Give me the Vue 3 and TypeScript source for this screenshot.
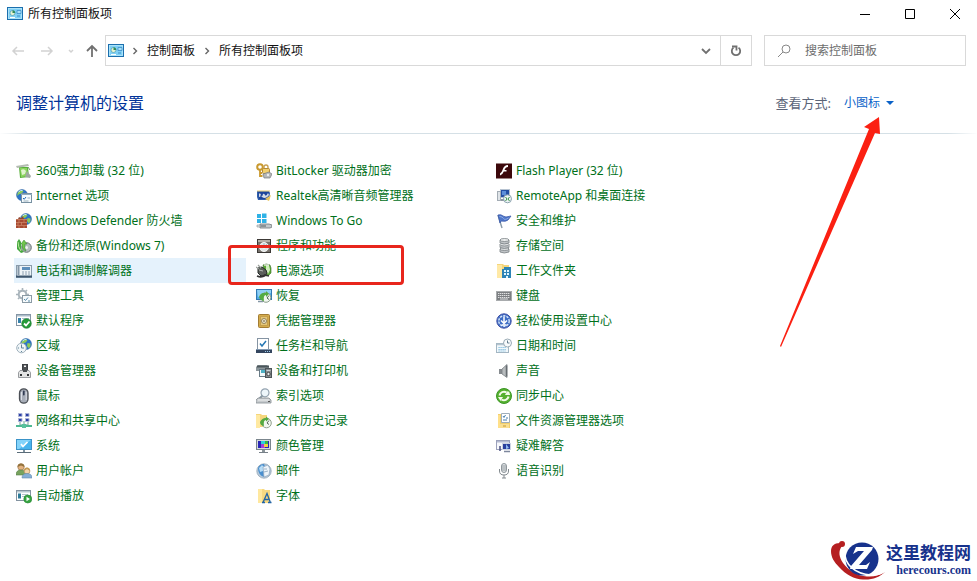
<script setup lang="ts">
import { ref } from 'vue'

interface PanelItem {
  name: string
  icon: string
}

const panelIcon =
  '<rect x=".5" y="1.5" width="15" height="12" fill="#7fd0f5" stroke="#1b6fae"/><rect x="1.5" y="2.5" width="13" height="10" fill="none" stroke="#b5e6fb" stroke-width=".8"/><circle cx="5.5" cy="7" r="2.5" fill="#e6f3cf" stroke="#4f9cb5" stroke-width=".7"/><path d="M5.5 7V4.3A2.7 2.7 0 0 1 8.2 7z" fill="#2f8b5d"/><path d="M10 4.5h4v3h-4z" fill="#a8e0fa" stroke="#3f8fc8" stroke-width=".8"/><path d="M10 10h3" stroke="#3f8fc8"/><path d="M3 11.5h5" stroke="#fff"/>'

const globe =
  '<circle cx="10" cy="6" r="5.5" fill="#2c76c9" stroke="#245b9c" stroke-width=".5"/><path d="M7 2q3-1.6 4.5.2L9.7 4.5 7 5.3 5.2 7q-.5-3 1.8-5zM11.5 5l3 .5q.7 3-1.6 5L11 8z" fill="#8ccb5a"/><path d="M6.5 3q2-2 4-1.5" stroke="#c9e9ff" fill="none"/>'

const items: PanelItem[] = [
  { name: '360强力卸载 (32 位)', icon: '<path d="M3 4h9l1 10-9 1z" fill="#58b03a"/><path d="M4 5h7l1 8-7 1z" fill="#8bd45f"/><path d="M0 3l12-2 1 2-12 2z" fill="#b4bcb2"/><path d="M5 7q3-2 5 1l-1 3-3 1z" fill="#dff3cd"/><path d="M11 8l4 5-1 2-5-1z" fill="#9fa8a0"/><path d="M12 4l2 3" stroke="#6f9a68"/>' },
  { name: 'BitLocker 驱动器加密', icon: '<circle cx="4" cy="4" r="2.8" fill="none" stroke="#c9992e" stroke-width="2"/><path d="M4 7v7m0-1h2.500m-2.500-3h2" stroke="#c9992e" stroke-width="1.8"/><path d="M8 6V4q0-2 2-2t2 2v2" fill="none" stroke="#c8a050" stroke-width="1.4"/><rect x="6.5" y="5.5" width="7" height="5" rx="1" fill="#f2cf6d" stroke="#b58a35"/><path d="M7 11l6-2 3 2-2 4H8z" fill="#b5b7b8" stroke="#777b7e" stroke-width=".7"/><circle cx="12" cy="12" r="1.2" fill="#ececec"/>' },
  { name: 'Flash Player (32 位)', icon: '<rect width="16" height="15" y=".5" fill="#3c080b"/><path d="M12 4Q9.5 4 8.500 7h2v1.600H7.8Q6.600 12 4 12.500v-1.900Q5.500 10 6.500 7q1.500-4.800 5.500-4.900z" fill="#fff"/>' },
  { name: 'Internet 选项', icon: '<g transform="translate(-4 1)">' + globe + '</g><rect x="5.5" y="5.5" width="10" height="9" fill="#f5fbff" stroke="#7891a2"/><path d="M5 6.5h11" stroke="#90adc0"/><path d="M7 10l1.200 1.300L10 9" fill="none" stroke="#2468b1"/><path d="M11.500 10h2.500M7.500 13h5" stroke="#9db0bb"/>' },
  { name: 'Realtek高清晰音频管理器', icon: '<path d="M1 3h12l1 2-1 7H2L1 9z" fill="#315eaa"/><path d="M2 4h11l-1 7H3z" fill="#1d459c"/><path d="M3 6q1-2 2 1t2-1q1-1 2 1t3-2l1 2q-2 3-4 3T6 9t-3 0z" fill="#d6dce5"/><circle cx="5" cy="8" r=".8" fill="#18418a"/><path d="M9 11l6-4-2 6z" fill="#e8c25a"/><path d="M1 3h13" stroke="#e5c977"/>' },
  { name: 'RemoteApp 和桌面连接', icon: '<rect x="4.5" y="1.5" width="9" height="8" fill="#2450a4" stroke="#b7c3d1"/><path d="M6 3h4v4H6z" fill="#5d8fd9"/><rect x="1.5" y="3.5" width="3" height="9" fill="#dfe4e8" stroke="#a3acb4"/><path d="M5 12h4" stroke="#8d98a3" stroke-width="2"/><circle cx="11.5" cy="10.8" r="4" fill="#edf4f6" stroke="#8ba1ad"/><path d="M9.500 9l1.500 2-1.500 2m4-4L12 11l1.500 2" fill="none" stroke="#3a9345"/>' },
  { name: 'Windows Defender 防火墙', icon: globe + '<rect x="0" y="6" width="11" height="9" fill="#a84a31"/><path d="M0 6.500h11M0 9.500h11M0 12.500h11M3 6v3m5-3v3M5.500 9v3M2 9v3m1 1v2m5-2v2" stroke="#d08a6c" stroke-width=".7"/><path d="M2 6l1-2 2 1 2-2 1 3z" fill="#8e4835"/>' },
  { name: 'Windows To Go', icon: '<path d="M1 1h4v4H1zM6 .5h4.500V5H6zM1 6h4v4H1zM6 6h4.500v4H6z" fill="#2fb2e6"/><path d="M4 11h9l3 1v2l-2 1H4z" fill="#c2c8cc" stroke="#6d7377" stroke-width=".8"/><path d="M5 12h5v2H5z" fill="#8b9296"/><path d="M1 12h3v2H1z" fill="#dfe3e5" stroke="#8b9296" stroke-width=".6"/>' },
  { name: '安全和维护', icon: '<path d="M2 2l4 13" stroke="#899ba9" stroke-width="1.4"/><path d="M2 2q3-1 5 1t8 0l-3 4q-2 2-7 1L4 10z" fill="#4f78cb" stroke="#3a58a8" stroke-width=".8"/><path d="M3.5 3.5q3 0 4 2t5-.5" fill="none" stroke="#8fabe4"/>' },
  { name: '备份和还原(Windows 7)', icon: '<circle cx="10.5" cy="9.5" r="4.800" fill="#b3bcbe" stroke="#6b7475"/><circle cx="10.5" cy="9.5" r="1.5" fill="#f2f3f3"/><path d="M1 4l2-3 2 3v7l3 3-3 1-4-4z" fill="#45a840"/><path d="M5 6l3-4 3 4H9q-1 4 1 7-4-1-4-7z" fill="#72c54d" stroke="#2d842d" stroke-width=".5"/><path d="M2 4q0 5 3 9" stroke="#bce69a" fill="none"/>' },
  { name: '程序和功能', icon: '<rect x="1.5" y="1.5" width="13" height="13" fill="#77726c" stroke="#3c3936"/><path d="M2 3h12" stroke="#cbc6bd" stroke-width="1.5"/><circle cx="8" cy="9" r="4.5" fill="#e2e7e7" stroke="#f6f6f6"/><circle cx="8" cy="9" r="1.3" fill="#6e7979" stroke="#fff"/><path d="M8 5v2m2.800-.8L9.200 7.800" stroke="#93b8c8"/>' },
  { name: '存储空间', icon: '<g fill="#c0c4c7" stroke="#7a8084" stroke-width=".8"><path d="M4 11v3q4 2 9 0v-3z"/><ellipse cx="8.5" cy="11" rx="4.5" ry="1.5" fill="#dfe2e3"/><path d="M4 6.500v3q4 2 9 0v-3z"/><ellipse cx="8.5" cy="6.5" rx="4.5" ry="1.5" fill="#dfe2e3"/><path d="M4 2v3q4 2 9 0V2z"/><ellipse cx="8.5" cy="2" rx="4.5" ry="1.5" fill="#eceeee"/></g>' },
  { name: '电话和调制解调器', icon: '<rect x=".5" y="2.5" width="15" height="12" fill="#edf3f7" stroke="#8a9cab"/><path d="M1.500 3h2v9h-2z" fill="#8497a7"/><path d="M6 4h8v3H6z" fill="#5d8fbb"/><path d="M6 9h2m1 0h2m1 0h2M6 11h2m1 0h2m1 0h2" stroke="#8ea1b2"/><path d="M0 13.500h16" stroke="#3d566f" stroke-width="2"/>' },
  { name: '电源选项', icon: '<path d="M7 2q3-2 7 0l1 3v5q-2 3-6 3z" fill="#5cab36" stroke="#376d26" stroke-width=".6"/><path d="M10 2l3 0 1 5-2 4-2-3z" fill="#d2efbe"/><path d="M8 2h5" stroke="#dfe5dc" stroke-width="1.5"/><path d="M2 5l4-1 4 3 1 3-2 3-4 0-3-3z" fill="#5b5f5b" stroke="#242a27"/><path d="M0 4l3 2M2 2l3 3" stroke="#9a9f9a" stroke-width="1.2"/><path d="M3 7l4 1" stroke="#b7bcb7"/><path d="M1 13q5 2 8-1l4 1" fill="none" stroke="#333" stroke-width="1.8"/>' },
  { name: '工作文件夹', icon: '<path d="M1 1h6l1 1h5v12H1z" fill="#f5d67c"/><path d="M1 2h5v13H1z" fill="#ffe9a6"/><path d="M6 6h2V4h7v11H6z" fill="#2d84b7"/><path d="M8 7h2v2H8zm3 0h2v2h-2zM8 10h2v2H8zm3 0h2v2h-2zm-1 3h2v2h-2z" fill="#dff6ff"/>' },
  { name: '管理工具', icon: '<circle cx="6.5" cy="6.5" r="3.800" fill="none" stroke="#a9b4bb" stroke-width="2"/><path d="M6.5 0v2.5m0 8V13M0 6.5h2.5m8 0H13M2 2l1.700 1.700M2 11l1.700-1.700M11 2L9.300 3.700" stroke="#a9b4bb" stroke-width="1.6"/><circle cx="6.5" cy="6.5" r="1.500" fill="#fff"/><rect x="6.5" y="7.5" width="9" height="7" fill="#f6fafc" stroke="#8b9ba5"/><path d="M8 11l1.500 1.500L12 9.500m0 3.500h2" stroke="#5a8cab" fill="none"/>' },
  { name: '恢复', icon: '<rect x=".5" y="1.5" width="15" height="10" fill="#4fa9e4" stroke="#3279b2"/><path d="M1 2h14v3L2 9z" fill="#8fd0f5"/><path d="M2 13.500h5" stroke="#8497a5" stroke-width="1.500"/><circle cx="10" cy="9.5" r="4.800" fill="#f2f7f0" stroke="#8b9f8d"/><path d="M3 9q2-5 7-4v-2l3 3-3 3V7q-3 0-2 6-4-.500-5-4z" fill="#55ac43"/><path d="M11 10l2-2.500M11 10l2 1.500" stroke="#4f6652"/>' },
  { name: '键盘', icon: '<rect x=".5" y="3.5" width="15" height="9" fill="#7c7f82" stroke="#a8abad"/><path d="M2 5.500h12M2 7.500h12M2 9.500h12" stroke="#dfe1e2" stroke-dasharray="1.400 .6"/><path d="M4 11h8" stroke="#dadddf"/>' },
  { name: '默认程序', icon: '<rect x=".5" y="1.5" width="14" height="11" fill="#fff" stroke="#8596a5"/><path d="M1 2h13v1.500H1z" fill="#adbdca"/><path d="M2 5h3v5H2z" fill="#3681ab"/><path d="M6 5.500h7" stroke="#a9bccb"/><circle cx="10.5" cy="10.5" r="4.800" fill="#259a39" stroke="#187a2a" stroke-width=".6"/><path d="M8 10.5l2 2 3.500-4" fill="none" stroke="#fff" stroke-width="1.8"/>' },
  { name: '凭据管理器', icon: '<rect x="2.5" y="1.5" width="11" height="13" rx="1" fill="#d3ab4b" stroke="#a37c34"/><rect x="4.5" y="3.5" width="7" height="9" fill="#e4c678" stroke="#c59f4c"/><circle cx="8" cy="8" r="2.500" fill="#efe9d1" stroke="#94825a"/><circle cx="8" cy="8" r=".9" fill="#8e815f"/>' },
  { name: '轻松使用设置中心', icon: '<circle cx="8" cy="8" r="7.2" fill="#4573c6" stroke="#3e4fa5"/><circle cx="8" cy="8" r="5.2" fill="#3f6ec5" stroke="#dae8fb" stroke-dasharray="2.2 1.1" stroke-width="1.400"/><path d="M8 3.500V10M5 7.500L8 10.500l3-3M5.500 12h5" fill="none" stroke="#fff" stroke-width="1.500"/>' },
  { name: '区域', icon: globe + '<circle cx="5.5" cy="10" r="4.8" fill="#f1f6f8" stroke="#9fb0bc"/><path d="M5.5 6.5V10H8M2 10h1m2.5 3v1" fill="none" stroke="#61859a"/>' },
  { name: '任务栏和导航', icon: '<rect x="1.5" y=".5" width="11" height="11" fill="#fff" stroke="#8594a3"/><path d="M4 5.500l2 2.500 4-5" fill="none" stroke="#2577b3" stroke-width="1.500"/><path d="M0 12h16v3H0z" fill="#34465f"/><path d="M9 13.500h1m1 0h1m1 0h1" stroke="#9cc9ea"/><path d="M0 11.500h16" stroke="#7f97b0"/>' },
  { name: '日期和时间', icon: '<rect x=".5" y="5.5" width="12" height="9" fill="#f2f8fb" stroke="#a3b6c3"/><path d="M1 6.5h11" stroke="#b4c4cf" stroke-width="1.500"/><path d="M2.500 9.500h8M2.500 11.500h8M2.500 13h7" stroke="#7dbadc" stroke-dasharray="1.2 .8"/><circle cx="11.5" cy="5" r="4" fill="#f8fbfc" stroke="#9aaab5"/><path d="M11.5 2.5V5h2" fill="none" stroke="#617b8d"/>' },
  { name: '设备管理器', icon: '<rect x="6.5" y="1.5" width="5" height="7" fill="#4c5053" stroke="#3e4144"/><path d="M8 2.500h2v1.500H8z" fill="#f7f7f7"/><path d="M2.500 9.500l1.500-2h9l1.500 2v5h-12z" fill="#e2e3e3" stroke="#83878a" stroke-width=".8"/><path d="M7 7h4v2H7z" fill="#4c5053"/><path d="M4 12h2m5 0h2" stroke="#303436" stroke-width="1.800"/>' },
  { name: '设备和打印机', icon: '<path d="M0 4l2-2h9l2 2v4H0z" fill="#8d979c"/><path d="M1 3.500h12" stroke="#4b565b" stroke-width="2"/><rect x="3.500" y="6.500" width="6" height="7" fill="#f1f8fa" stroke="#677a85"/><path d="M5 7h4v3H5z" fill="#4db0c4"/><rect x="9.5" y="5.500" width="6" height="9" fill="#858b8e" stroke="#4d5559"/><circle cx="12.5" cy="11" r="1.700" fill="#e6ecef" stroke="#444"/><path d="M10.500 7.500h4" stroke="#cfd4d6"/>' },
  { name: '声音', icon: '<path d="M3 6h3v5H3z" fill="#868b8f"/><path d="M6 6l5-4.500v13L6 11z" fill="#b8bcbe" stroke="#7b8185" stroke-width=".8"/><path d="M10.500 2.500v11" stroke="#666c70" stroke-width="1.500"/>' },
  { name: '鼠标', icon: '<rect x="3.5" y=".8" width="8.500" height="14.4" rx="4.2" fill="#a7adb8" stroke="#4b4f55" stroke-width="1.3"/><path d="M5.500 4v8M10.200 4v8" stroke="#dce0e8"/><rect x="7" y="2.500" width="1.600" height="5" rx=".8" fill="#303a52"/>' },
  { name: '索引选项', icon: '<circle cx="9" cy="4.800" r="4" fill="#edf6fb" stroke="#94a3b0" stroke-width="1.2"/><path d="M6.5 7.500L3.500 10.500" stroke="#8999a4" stroke-width="2"/><path d="M2 10h11l2 2v3H0v-3z" fill="#c6cacd" stroke="#868d92" stroke-width=".8"/><path d="M2 12h11" stroke="#eff1f2"/><path d="M12 13.500h2" stroke="#555"/>' },
  { name: '同步中心', icon: '<circle cx="8" cy="8" r="7.5" fill="#55b02f" stroke="#3c9626"/><path d="M3.500 7.500A4.500 4.500 0 0 1 10.500 4.500M12.500 8.500A4.500 4.500 0 0 1 5.500 11.500" fill="none" stroke="#f3fbe9" stroke-width="2"/><path d="M9 7h5l-2.500-4zM7 9H2l2.500 4z" fill="#f3fbe9"/><path d="M9.500 7h4.500l-1-4z" fill="#f3fbe9"/>' },
  { name: '网络和共享中心', icon: '<path d="M4 9v3h8V9M8 8v5" fill="none" stroke="#8fb9ae" stroke-width="1.300"/><path d="M0 13h16" stroke="#4eb894" stroke-width="2"/><g fill="#2b3fa6" stroke="#aab3d6"><path d="M2.500.5h3.500v3h-3.500zM9.500.5h3.500v3h-3.500zM2.500 5.500h3.500v3h-3.500zM9.500 5.500h3.500v3h-3.500z"/></g><path d="M6 11h4v4H6z" fill="#58c19d"/>' },
  { name: '文件历史记录', icon: '<path d="M0 1h5l1 1h5v12H0z" fill="#f5d67c"/><path d="M0 2h4v13H0z" fill="#ffe9a1"/><circle cx="10.5" cy="10" r="4.800" fill="#f1f6ee" stroke="#92a08f"/><path d="M4 9q2-4 6-4V3.500l3 2.500-3 2.500V7q-3 0-2 6-4-.500-4-4z" fill="#55a941"/><path d="M11 10l2-2.500M11 10l2 1.500" stroke="#536657"/>' },
  { name: '文件资源管理器选项', icon: '<path d="M2 1h6l1 1h5v13H2z" fill="#f2cf6d"/><path d="M2 2h2v13H2z" fill="#ffe08a"/><path d="M5.500 .5h8v9h-8z" fill="#fff" stroke="#9fadb9"/><path d="M7 3l1 1.500L9.500 2M10 5h2M7 7h4" fill="none" stroke="#477eae"/><path d="M4 11h9v4H4z" fill="#fadf92"/><path d="M7 13h3" stroke="#c59a35"/>' },
  { name: '系统', icon: '<rect x=".5" y="1.5" width="15" height="10" fill="#48b4ed" stroke="#3a93c8"/><path d="M1 2h14L3 11H1z" fill="#83d3fa"/><path d="M5 6l2 2.500L11.500 4" stroke="#fff" stroke-width="1.6" fill="none"/><path d="M7 12h2v2H7z" fill="#7f929f"/><path d="M1 14.500h14" stroke="#5a6c79"/>' },
  { name: '颜色管理', icon: '<rect x=".5" y="1.500" width="14" height="10" fill="#d5dadd" stroke="#7b868d"/><path d="M2 3h11v7H2z" fill="#2a26b7"/><path d="M5 3h4v3H5z" fill="#2dd2dc"/><path d="M9 3h3v4H9z" fill="#35b744"/><path d="M5 6h4v4H5z" fill="#a63bdc"/><path d="M8 6h4v3H8z" fill="#f0d040"/><path d="M6 12h3v2H6z" fill="#8b949a"/><path d="M3 14.500h9" stroke="#788189"/>' },
  { name: '疑难解答', icon: '<rect x=".5" y="2.500" width="13" height="9" fill="#f7f8fc" stroke="#9ba1bb"/><path d="M1 3h12v1.500H1z" fill="#b5bbd1"/><rect x="6.500" y="5.500" width="8" height="6" fill="#293e9d" stroke="#cdd3e2"/><path d="M8 13.500h6" stroke="#7d879d" stroke-width="1.500"/><path d="M10 6l3 4-3 1z" fill="#8fb8f0"/><path d="M4 8v5" stroke="#4b5180" stroke-width="1.500"/>' },
  { name: '用户帐户', icon: '<circle cx="5" cy="4" r="3.200" fill="#e4b27f" stroke="#a5825a" stroke-width=".8"/><path d="M1.500 4q0-3.500 3.500-3.500T8.500 4L5 2.500z" fill="#93723c"/><path d="M0 12q0-5 5-5t5 5z" fill="#77a35e" stroke="#557d47" stroke-width=".6"/><circle cx="11" cy="8" r="2.900" fill="#f3d3a8" stroke="#b8935f" stroke-width=".8"/><path d="M8 8q0-3.500 3-3.500t3 3.500l-3-2z" fill="#c49b52"/><path d="M6 15q0-4.500 5-4.500t5 4.500z" fill="#84aed6" stroke="#6389ab" stroke-width=".6"/>' },
  { name: '邮件', icon: '<circle cx="8" cy="8" r="7.200" fill="#b8cbdc" stroke="#94a6b5" stroke-width=".8"/><path d="M2 5q2-4 6-4l2 5-2 8q-6-2-6-9z" fill="#4a8fce"/><path d="M3 5l3-3 2 2-1 4-3 1z" fill="#b6dcf6"/><path d="M7 4l5-2 2 4-1 6-5 2z" fill="#eef4f9" stroke="#8ca5bd" stroke-width=".7"/><path d="M8 6h3M8 9l4-1" fill="none" stroke="#9db5c9"/>' },
  { name: '语音识别', icon: '<rect x="5.500" y=".500" width="5" height="9" rx="2.500" fill="#e2e5e7" stroke="#8f979c"/><path d="M6 3h4M6 5h4M6 7h4" stroke="#959da2"/><path d="M3.500 6v2q0 4 4.500 4t4.500-4V6M8 12v3m-2 0h4" fill="none" stroke="#82898e"/>' },
  { name: '自动播放', icon: '<rect x=".500" y="2.500" width="14" height="10" fill="#fff" stroke="#8393a0"/><path d="M1 3h13v1.500H1z" fill="#b7c8d0"/><path d="M2 5.500h3v5H2z" fill="#2d7b99"/><path d="M6 6.500h6M6 8.500h3" stroke="#b3c4cd"/><circle cx="11.800" cy="11" r="4" fill="#36a441" stroke="#238530" stroke-width=".6"/><path d="M10.500 8.800v4.400l3.500-2.200z" fill="#fff"/>' },
  { name: '字体', icon: '<path d="M2 1h6l1 1h5v13H2z" fill="#f7d981"/><path d="M2 1h4v14H2z" fill="#ffe89f"/><path d="M6 14.500h3m3 0h3.500M7.200 14L11 5.500l3.200 8.500M8.500 11.500h4" fill="none" stroke="#2465a5" stroke-width="1.300"/>' },
]

const selected = ref('电话和调制解调器')
const view = ref('小图标')
const query = ref('')
</script>

<template>
  <div class="window">
    <header class="titlebar">
      <svg class="icon" viewBox="0 0 16 16" v-html="panelIcon" />
      <span class="caption">所有控制面板项</span>
      <div class="controls">
        <button type="button" aria-label="最小化"><svg viewBox="0 0 10 10"><path d="M0 5.5h10" /></svg></button>
        <button type="button" aria-label="最大化"><svg viewBox="0 0 10 10"><path d="M.5.5h9v9h-9z" /></svg></button>
        <button type="button" aria-label="关闭"><svg viewBox="0 0 10 10"><path d="M0 0l10 10M10 0L0 10" /></svg></button>
      </div>
    </header>

    <div class="toolbar">
      <nav class="history">
        <button type="button" aria-label="后退" disabled><svg viewBox="0 0 14 14"><path d="M13 7H2M6 3L2 7l4 4" /></svg></button>
        <button type="button" aria-label="前进" disabled><svg viewBox="0 0 14 14"><path d="M1 7h11M8 3l4 4-4 4" /></svg></button>
        <button type="button" class="small" aria-label="最近浏览的位置" disabled><svg viewBox="0 0 14 14"><path d="M5 6l2 2 2-2" /></svg></button>
        <button type="button" class="up" aria-label="上移"><svg viewBox="0 0 14 14"><path d="M7 13V2M2 7l5-5 5 5" /></svg></button>
      </nav>
      <div class="address">
        <svg class="icon" viewBox="0 0 16 16" v-html="panelIcon" />
        <svg class="chevron" viewBox="0 0 6 8"><path d="M1.5 1l3 3-3 3" /></svg>
        <a href="#">控制面板</a>
        <svg class="chevron" viewBox="0 0 6 8"><path d="M1.5 1l3 3-3 3" /></svg>
        <a href="#">所有控制面板项</a>
        <button type="button" class="drop" aria-label="以前的位置"><svg viewBox="0 0 14 14"><path d="M3 5l4 4 4-4" /></svg></button>
        <button type="button" class="refresh" aria-label="刷新"><svg viewBox="0 0 14 14"><path d="M9.5 3.600A4.200 4.200 0 1 1 4.500 3.600" /><path d="M3 2.500h4.500v4" /></svg></button>
      </div>
      <label class="search">
        <svg viewBox="0 0 14 14"><circle cx="9" cy="5" r="4" /><path d="M6 8l-5 5" /></svg>
        <input v-model="query" type="search" placeholder="搜索控制面板" aria-label="搜索控制面板" />
      </label>
    </div>

    <main>
      <div class="heading">
        <h1>调整计算机的设置</h1>
        <div class="view">
          <label for="view">查看方式:</label>
          <span class="picker">
            <select id="view" v-model="view">
              <option>小图标</option>
              <option>大图标</option>
              <option>类别</option>
            </select>
            <svg viewBox="0 0 8 4"><path d="M0 0h8L4 4z" /></svg>
          </span>
        </div>
      </div>
      <ul class="items">
        <li v-for="item in items" :key="item.name">
          <a href="#" :class="{ selected: item.name === selected }" @mouseenter="selected = item.name">
            <svg class="icon" viewBox="0 0 16 16" v-html="item.icon" />
            <span>{{ item.name }}</span>
          </a>
        </li>
      </ul>
    </main>

    <div class="marker"></div>
    <svg class="pointer" viewBox="0 0 102 232"><path d="M100 1L85 11l5 2L1 230l1 1L96 17l5 1z" /></svg>

    <div class="brand">
      <svg viewBox="0 0 58 42">
        <path d="M10 4C4 4 1 7 1 12c0 6 3 11 8 16 7 8 15 12 24 12.500 9 .5 17-2 22-8-5 4-11 5.500-18 5C27 37 18 31 13 24 9 18 8 12 12 7z" fill="#b51f21" />
        <circle cx="12" cy="5" r="3" fill="#b51f21" />
        <circle cx="32" cy="20" r="16.500" fill="#17328c" />
        <path d="M15 13c-1 12 10 22 26 23 6 0 11-1 14-4" fill="none" stroke="#fff" stroke-width="1.500" />
        <path d="M23 15l3-7h17l-1 3-13 15h7l4-3-3 7H20l1-3 13-15h-6z" fill="#fff" />
      </svg>
      <div class="brand-text">
        <strong>这里教程网</strong>
        <span>herecours.com</span>
      </div>
    </div>
  </div>
</template>

<style>
body {
  margin: 0;
  background: #fff;
}
</style>

<style scoped>
.window {
  position: relative;
  box-sizing: border-box;
  min-height: 100vh;
  overflow: hidden;
  background: #fff;
  color: #111;
  font-family: "Noto Sans", "Noto Sans CJK SC", sans-serif;
  font-size: 12px;
  line-height: 16px;
}

button {
  display: grid;
  place-items: center;
  padding: 0;
  border: 0;
  background: none;
}

a {
  color: inherit;
  text-decoration: none;
}

.icon {
  flex: none;
  width: 16px;
  height: 16px;
}

.titlebar {
  display: flex;
  align-items: center;
  height: 28px;
  padding-left: 7px;
}

.caption {
  margin-left: 5px;
}

.controls {
  display: flex;
  margin-left: auto;
}

.controls button {
  width: 45px;
  height: 28px;
}

.controls svg {
  width: 10px;
  height: 10px;
  fill: none;
  stroke: #000;
}

.toolbar {
  display: flex;
  align-items: center;
  height: 31px;
  padding: 7px 11px 0 7px;
}

.history {
  display: flex;
  width: 98px;
}

.history button {
  width: 22px;
  height: 28px;
}

.history button + button {
  margin-left: 7px;
}

.history .small,
.history .up {
  width: 18px;
}

.history button.small {
  margin-left: 4px;
}

.history button.up {
  margin-left: 3px;
}

.history svg {
  width: 14px;
  height: 14px;
  fill: none;
  stroke: #d2d2d2;
  stroke-width: 1.5;
}

.history .up svg {
  stroke: #707070;
  stroke-width: 1.8;
}

.address {
  display: flex;
  flex: 1;
  align-items: center;
  box-sizing: border-box;
  height: 31px;
  padding-left: 2px;
  border: 1px solid #d9d9d9;
}

.chevron {
  width: 6px;
  height: 8px;
  margin: 0 9px;
  fill: none;
  stroke: #666;
  stroke-width: 1.4;
}

.address .icon + .chevron {
  margin-left: 8px;
}

.address button {
  height: 29px;
}

.address button svg {
  width: 14px;
  height: 14px;
  fill: none;
  stroke: #707070;
  stroke-width: 1.8;
}

.drop {
  width: 28px;
  margin-left: auto;
}

.address .refresh {
  width: 31px;
  border-left: 1px solid #d9d9d9;
}

.search {
  display: flex;
  align-items: center;
  box-sizing: border-box;
  width: 202px;
  height: 31px;
  margin-left: 12px;
  padding: 0 12px;
  border: 1px solid #d9d9d9;
}

.search svg {
  flex: none;
  width: 14px;
  height: 14px;
  fill: none;
  stroke: #888;
}

.search input {
  flex: 1;
  min-width: 0;
  margin-left: 14px;
  padding: 0;
  border: 0;
  outline: 0;
  background: none;
  font: inherit;
}

.search input::placeholder {
  color: #6d6d6d;
  opacity: 1;
}

.heading {
  display: flex;
  align-items: center;
  justify-content: space-between;
  height: 60px;
  margin-top: 7px;
  padding: 0 83px 0 16px;
  border-bottom: 1px solid;
  border-image: linear-gradient(90deg, transparent, #d5e0e6 30px, #d5e0e6 calc(100% - 30px), transparent) 1;
}

h1 {
  margin: 0;
  color: #003399;
  font-size: 16px;
  font-weight: 400;
  line-height: 20px;
}

.view {
  display: flex;
  align-items: center;
}

.view label {
  margin-right: 13px;
  color: #5b6478;
  font-size: 13px;
}

.picker {
  display: flex;
  align-items: center;
  gap: 5px;
}

.picker select {
  appearance: none;
  padding: 0;
  border: 0;
  background: none;
  color: #0a62c8;
  font: inherit;
}

.picker svg {
  width: 8px;
  height: 4px;
  fill: #0a62c8;
}

.items {
  display: grid;
  grid-template-columns: repeat(3, 232px);
  column-gap: 8px;
  margin: 0;
  padding: 24px 14px;
  list-style: none;
}

.items a {
  display: flex;
  align-items: center;
  gap: 4px;
  height: 25px;
  padding-left: 2px;
  color: #00701a;
  white-space: nowrap;
}

.items a.selected {
  background: #e5f2fc;
}

.marker {
  position: absolute;
  top: 245px;
  left: 228px;
  box-sizing: border-box;
  width: 176px;
  height: 40px;
  border: 3px solid #e8261c;
  border-radius: 4px;
}

.pointer {
  position: absolute;
  top: 116px;
  left: 779px;
  width: 102px;
  height: 232px;
  fill: #fb2012;
}

.brand {
  position: absolute;
  right: 6px;
  bottom: 0;
  display: flex;
  align-items: center;
  color: #17328c;
}

.brand > svg {
  width: 58px;
  height: 42px;
}

.brand-text {
  display: flex;
  flex-direction: column;
  align-items: flex-end;
  margin-left: -2px;
}

.brand-text strong {
  font-family: "Noto Sans CJK SC", sans-serif;
  font-size: 17px;
  line-height: 20px;
}

.brand-text span {
  font: bold 12px/16px "Liberation Serif", serif;
}
</style>
